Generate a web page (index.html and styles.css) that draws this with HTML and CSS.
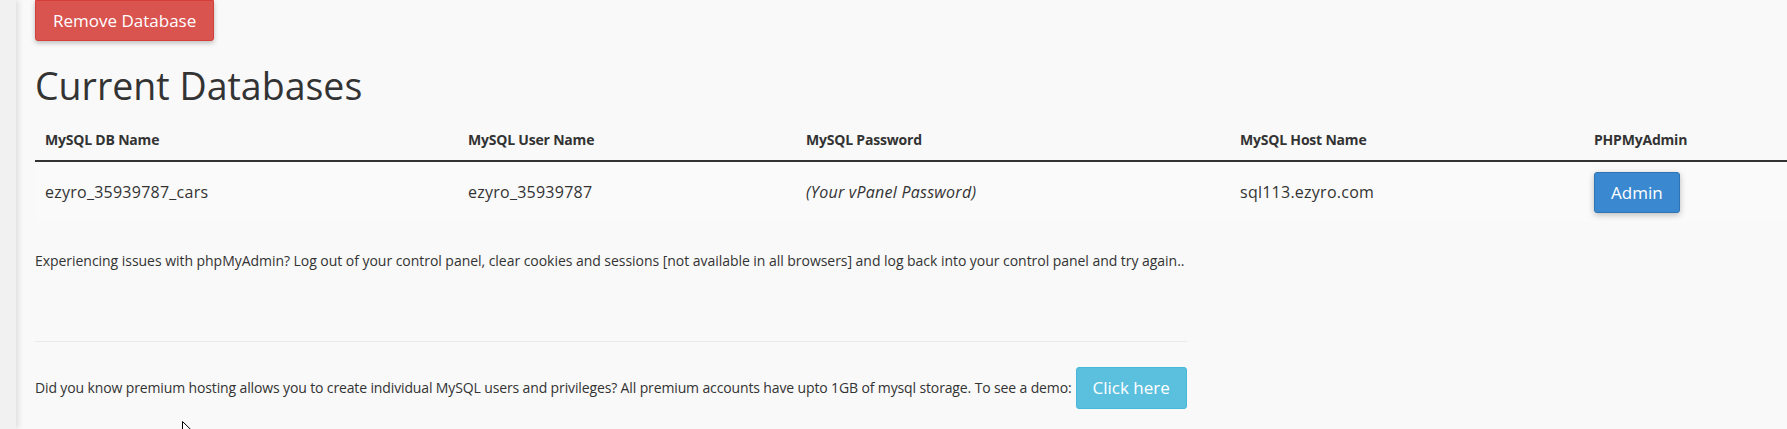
FILE: index.html
```html
<!DOCTYPE html>
<html lang="en">
<head>
<meta charset="utf-8">
<title>Current Databases</title>
<link rel="stylesheet" href="styles.css">
</head>
<body>
<div class="layout">
  <aside class="sidebar"></aside>
  <main class="content">
    <button class="btn btn-danger">Remove Database</button>
    <h1 class="title">Current Databases</h1>
    <table class="db-table">
      <colgroup>
        <col class="c1"><col class="c2"><col class="c3"><col class="c4"><col class="c5">
      </colgroup>
      <thead>
        <tr>
          <th>MySQL DB Name</th>
          <th>MySQL User Name</th>
          <th>MySQL Password</th>
          <th>MySQL Host Name</th>
          <th>PHPMyAdmin</th>
        </tr>
      </thead>
      <tbody>
        <tr>
          <td>ezyro_35939787_cars</td>
          <td>ezyro_35939787</td>
          <td class="pw">(Your vPanel Password)</td>
          <td>sql113.ezyro.com</td>
          <td><button class="btn btn-primary">Admin</button></td>
        </tr>
      </tbody>
    </table>
    <p class="note">Experiencing issues with phpMyAdmin? Log out of your control panel, clear cookies and sessions [not available in all browsers] and log back into your control panel and try again..</p>
    <hr class="sep">
    <div class="promo">
      <span class="promo-text">Did you know premium hosting allows you to create individual MySQL users and privileges? All premium accounts have upto 1GB of mysql storage. To see a demo:</span>
      <button class="btn btn-info">Click here</button>
    </div>
  </main>
</div>
<svg class="cursor" width="14" height="20" viewBox="0 0 14 20" aria-hidden="true">
  <path d="M0.5 0.5 L0.5 16 L4.3 12.3 L6.8 18.2 L9 17.3 L6.6 11.5 L11.8 11.5 Z" fill="#fff" stroke="#000" stroke-width="1"/>
</svg>
</body>
</html>
```

FILE: styles.css
```css
html, body {
  margin: 0;
  padding: 0;
  background: #f9f9f9;
  font-family: "Open Sans", "Liberation Sans", sans-serif;
  color: #333;
  overflow: hidden;
}

.layout {
  display: flex;
  min-height: 429px;
}

.sidebar {
  flex: 0 0 16px;
  background: #f1f1f1;
  box-shadow: 2px 0 6px rgba(0, 0, 0, 0.12);
  position: relative;
  z-index: 1;
}

.content {
  flex: 1;
  padding-left: 19px;
  min-width: 0;
}

.btn {
  display: inline-block;
  font-family: "Open Sans", "Liberation Sans", sans-serif;
  font-size: 17px;
  line-height: 24px;
  padding: 8px 16px;
  border: 1px solid transparent;
  border-radius: 3px;
  color: #fff;
  cursor: pointer;
}

.btn-danger {
  background: #d9534f;
  border-color: #d43f3a;
  padding: 8px 17px 7px;
  box-shadow: 0 2px 5px rgba(0, 0, 0, 0.25);
  border-top-left-radius: 0;
  border-top-right-radius: 0;
}

.btn-primary {
  background: #3a89d0;
  border-color: #2f73b3;
  padding-bottom: 7px;
  box-shadow: 0 2px 6px rgba(0, 0, 0, 0.25);
}

.btn-info {
  background: #5bc0de;
  border-color: #46b8da;
}

.title {
  font-size: 37.5px;
  font-weight: 400;
  line-height: 41px;
  margin: 24px 0 14px;
  color: #333;
}

.db-table {
  width: 1752px;
  table-layout: fixed;
  border-collapse: collapse;
  margin-bottom: 29px;
}

.c1 { width: 423px; }
.c2 { width: 338px; }
.c3 { width: 434px; }
.c4 { width: 354px; }
.c5 { width: 203px; }

.db-table th {
  text-align: left;
  font-size: 14px;
  font-weight: 700;
  line-height: 20px;
  letter-spacing: -0.2px;
  padding: 10px;
  border-bottom: 2px solid #333;
}

.db-table td {
  font-size: 16px;
  line-height: 24px;
  letter-spacing: 0.25px;
  padding: 9px 10px;
  height: 42px;
  vertical-align: middle;
  background: #fafafa;
}

.db-table td .btn {
  letter-spacing: 0;
}

.db-table .pw {
  font-style: italic;
}

.note {
  font-size: 14px;
  line-height: 20px;
  letter-spacing: -0.04px;
  margin: 0;
}

.sep {
  width: 1152px;
  margin: 70px 0 0;
  border: 0;
  border-top: 1px solid #eaeaea;
}

.promo {
  display: flex;
  align-items: center;
  gap: 4px;
  margin-top: 25px;
  font-size: 14px;
  line-height: 20px;
}

.promo-text {
  letter-spacing: -0.13px;
}

.cursor {
  position: absolute;
  left: 182px;
  top: 421px;
  z-index: 5;
}
```
